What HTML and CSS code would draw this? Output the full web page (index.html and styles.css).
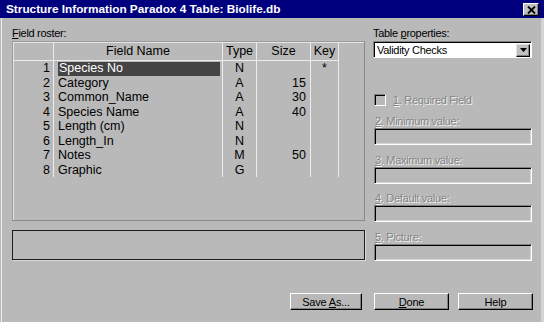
FILE: index.html
```html
<!DOCTYPE html>
<html lang="en">
<head>
    <meta charset="UTF-8">
    <title>Structure Information Paradox 4 Table: Biolife.db</title>
    <link rel="stylesheet" href="styles.css">
</head>
<body>
    <div class="window">
        <div class="titlebar">
            <span class="title">Structure Information Paradox 4 Table: Biolife.db</span>
            <span class="close-btn">
                <svg width="9" height="8" viewBox="0 0 9 8"><path d="M1 0.5 L8 7.5 M8 0.5 L1 7.5" stroke="#000" stroke-width="1.8"/></svg>
            </span>
        </div>

        <div class="main">
            <div class="left">
                <div class="label"><u>F</u>ield roster:</div>
                <div class="roster">
                    <div class="row head">
                        <div class="cell c-num"></div>
                        <div class="cell c-name center">Field Name</div>
                        <div class="cell c-type">Type</div>
                        <div class="cell c-size center">Size</div>
                        <div class="cell c-key">Key</div>
                    </div>
                    <div class="row">
                        <div class="cell c-num">1</div>
                        <div class="cell c-name"><span class="selected">Species No</span></div>
                        <div class="cell c-type">N</div>
                        <div class="cell c-size"></div>
                        <div class="cell c-key">*</div>
                    </div>
                    <div class="row">
                        <div class="cell c-num">2</div>
                        <div class="cell c-name">Category</div>
                        <div class="cell c-type">A</div>
                        <div class="cell c-size">15</div>
                        <div class="cell c-key"></div>
                    </div>
                    <div class="row">
                        <div class="cell c-num">3</div>
                        <div class="cell c-name">Common_Name</div>
                        <div class="cell c-type">A</div>
                        <div class="cell c-size">30</div>
                        <div class="cell c-key"></div>
                    </div>
                    <div class="row">
                        <div class="cell c-num">4</div>
                        <div class="cell c-name">Species Name</div>
                        <div class="cell c-type">A</div>
                        <div class="cell c-size">40</div>
                        <div class="cell c-key"></div>
                    </div>
                    <div class="row">
                        <div class="cell c-num">5</div>
                        <div class="cell c-name">Length (cm)</div>
                        <div class="cell c-type">N</div>
                        <div class="cell c-size"></div>
                        <div class="cell c-key"></div>
                    </div>
                    <div class="row">
                        <div class="cell c-num">6</div>
                        <div class="cell c-name">Length_In</div>
                        <div class="cell c-type">N</div>
                        <div class="cell c-size"></div>
                        <div class="cell c-key"></div>
                    </div>
                    <div class="row">
                        <div class="cell c-num">7</div>
                        <div class="cell c-name">Notes</div>
                        <div class="cell c-type">M</div>
                        <div class="cell c-size">50</div>
                        <div class="cell c-key"></div>
                    </div>
                    <div class="row">
                        <div class="cell c-num">8</div>
                        <div class="cell c-name">Graphic</div>
                        <div class="cell c-type">G</div>
                        <div class="cell c-size"></div>
                        <div class="cell c-key"></div>
                    </div>
                </div>
                <div class="status"></div>
            </div>

            <div class="right">
                <div class="label">Table <u>p</u>roperties:</div>
                <div class="combo">
                    <span>Validity Checks</span>
                    <span class="combo-btn">
                        <svg width="7" height="4" viewBox="0 0 7 4"><path d="M0 0 H7 L3.5 4 Z" fill="#000"/></svg>
                    </span>
                </div>

                <div class="check-row">
                    <span class="checkbox"></span>
                    <span class="disabled"><u>1</u>. Required Field</span>
                </div>

                <div class="field first">
                    <div class="disabled"><u>2</u>. Minimum value:</div>
                    <div class="input"></div>
                </div>
                <div class="field">
                    <div class="disabled"><u>3</u>. Maximum value:</div>
                    <div class="input"></div>
                </div>
                <div class="field">
                    <div class="disabled"><u>4</u>. Default value:</div>
                    <div class="input"></div>
                </div>
                <div class="field">
                    <div class="disabled"><u>5</u>. Picture:</div>
                    <div class="input"></div>
                </div>
            </div>
        </div>

        <div class="buttons">
            <button class="btn btn-save">Save <u>A</u>s...</button>
            <button class="btn btn-done"><u>D</u>one</button>
            <button class="btn">Help</button>
        </div>
    </div>
</body>
</html>
```

FILE: styles.css
```css
* { box-sizing: border-box; }
body { margin: 0; width: 544px; height: 322px; overflow: hidden; background: #b9b9b9; font-family: 'Liberation Sans', Arial, sans-serif; color: #000; }
u { text-decoration: underline; text-underline-offset: 1px; }

.window { width: 544px; height: 322px; box-shadow: inset 1px 0 0 #b9b9b9, inset 2px 0 0 #ececec, inset -3px 0 0 #d4d4d4; }

/* title bar */
.titlebar { height: 18px; background: #00007e; display: flex; align-items: center; justify-content: space-between; padding: 0 5px 0 6px; }
.title { color: #fff; font-weight: bold; font-size: 11.8px; letter-spacing: 0; }
.close-btn { width: 16px; height: 13px; background: #c0c0c0; display: flex; align-items: center; justify-content: center; border: 1px solid; border-color: #fff #000 #000 #fff; box-shadow: inset -1px -1px 0 #808080; margin-top: 1px; }

/* main area */
.main { height: 275px; padding: 8px 12px 0 12px; display: flex; }
.label { height: 14px; line-height: 14px; font-size: 11px; letter-spacing: -0.3px; }

.left { width: 353px; display: flex; flex-direction: column; }
.roster { margin-top: 1px; height: 180px; border: 1px solid; border-color: #9a9a9a #8a8a8a #8a8a8a #9a9a9a; box-shadow: inset 1px 1px 0 #e6e6e6; font-size: 12.5px; }
.row { display: flex; height: 14.5px; line-height: 14.5px; }
.row.head { height: 19px; line-height: 17px; padding-top: 1px; }
.head .cell { border-bottom: 1px solid #ececec; }
.cell { border-right: 1px solid #ececec; white-space: nowrap; overflow: hidden; }
.c-num { width: 41px; text-align: right; padding-right: 3px; }
.c-name { width: 169px; padding-left: 4px; }
.c-type { width: 34px; text-align: center; }
.c-size { width: 54px; text-align: right; padding-right: 4px; }
.c-key { width: 28px; text-align: center; }
.center { text-align: center; padding: 0; }
.selected { display: block; margin: 1px 2px 0 0; height: 14px; line-height: 13px; background: #444; color: #fff; padding-left: 1px; }

.status { margin-top: 9px; height: 30px; border: 1px solid #1c1c1c; box-shadow: 1px 1px 0 #d8d8d8; }

.right { margin-left: 8px; width: 159px; display: flex; flex-direction: column; }
.combo { margin-top: 1px; height: 17px; background: #fff; border: 1px solid; border-color: #808080 #fff #fff #808080; box-shadow: inset 1px 1px 0 #000; display: flex; align-items: center; justify-content: space-between; padding: 1px 1px 0 3px; font-size: 11px; letter-spacing: -0.3px; }
.combo-btn { width: 14px; height: 13px; background: #c0c0c0; border: 1px solid; border-color: #e0e0e0 #000 #000 #e0e0e0; box-shadow: inset -1px -1px 0 #808080; display: flex; align-items: center; justify-content: center; }

.disabled { font-size: 11px; letter-spacing: -0.3px; color: #858585; text-shadow: 1px 1px 0 #f4f4f4; height: 14px; line-height: 14px; }
.check-row { margin-top: 35px; height: 13px; display: flex; align-items: center; }
.checkbox { width: 12px; height: 12px; margin-left: 1px; margin-right: 7px; border: 1px solid; border-color: #808080 #fff #fff #808080; box-shadow: inset 1px 1px 0 #000; }
.field { margin-top: 7.7px; }
.field.first { margin-top: 8px; }
.field .disabled { padding-left: 2px; }
.input { height: 17px; margin-left: 1px; border: 1px solid; border-color: #808080 #fff #fff #808080; box-shadow: inset 1px 1px 0 #000, inset -1px -1px 0 #d4d4d4; }

/* button row */
.buttons { display: flex; justify-content: flex-end; padding-right: 11px; }
.btn { width: 75px; height: 17px; padding: 0; font-family: 'Liberation Sans', Arial, sans-serif; font-size: 11px; letter-spacing: -0.2px; background: #b9b9b9; color: #000; border: 1px solid; border-color: #fff #000 #000 #fff; box-shadow: inset -1px -1px 0 #808080; }
.btn-save { width: 72px; margin-right: 12px; }
.btn-done { margin-right: 9px; }
```
